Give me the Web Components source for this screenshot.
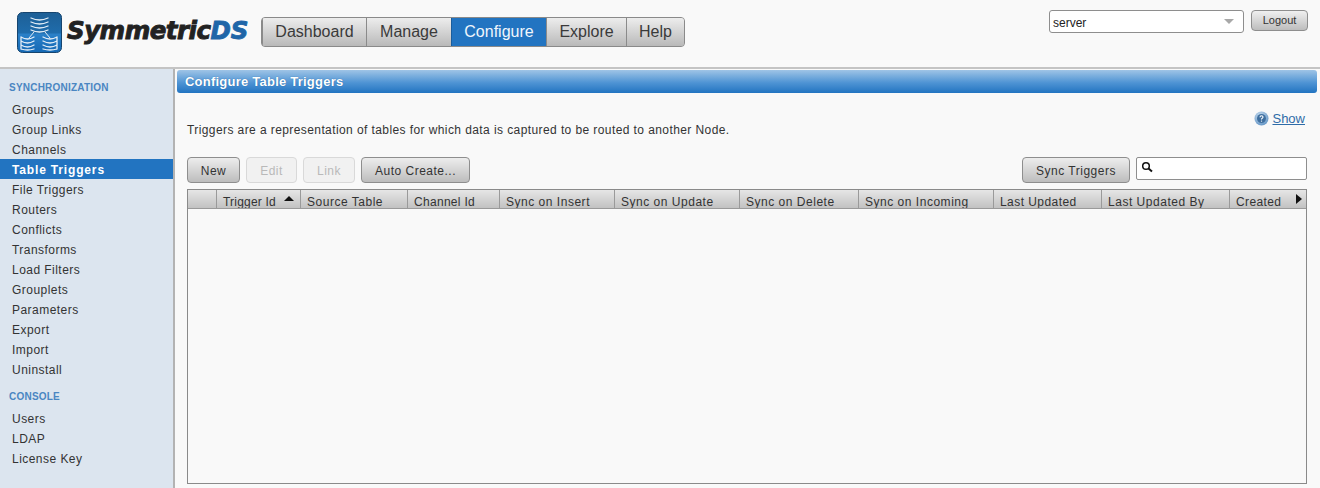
<!DOCTYPE html>
<html><head><meta charset="utf-8"><style>
html,body{margin:0;padding:0;height:488px;overflow:hidden;background:#f9f9f9;font:12px "Liberation Sans",Arial,sans-serif;color:#333}
</style></head><body>
<app-shell>
  <top-bar slot="top"></top-bar>
  <side-nav slot="side"></side-nav>
  <trigger-page slot="main"></trigger-page>
</app-shell>
<script>
const def=(name,html,init)=>customElements.define(name,class extends HTMLElement{
  constructor(){super();this.attachShadow({mode:'open'}).innerHTML=typeof html==='function'?html(this):html;}
  connectedCallback(){init&&init(this)}
});
def('app-shell',`<style>
:host{display:grid;grid-template-rows:67px 421px;grid-template-columns:173px 1147px;height:488px;overflow:hidden}
.t{grid-column:1/3}
.s{min-height:0;min-width:0}.m{min-width:0;min-height:0}
</style><div class="t"><slot name="top"></slot></div><div class="s"><slot name="side"></slot></div><div class="m"><slot name="main"></slot></div>`);

def('logo-mark',`<style>
:host{display:flex;align-items:center;gap:5px;width:244px}
svg{display:block;flex:none}
.w{font:italic 700 24.500px "DejaVu Sans",sans-serif;letter-spacing:-.5px;color:#222;-webkit-text-stroke:.9px #222;white-space:nowrap;line-height:34px;display:block;margin-top:-3px}
.w b{font-weight:700;color:#1f66a8;-webkit-text-stroke:.9px #1f66a8;letter-spacing:-.2px}
</style>
<svg width="45" height="41" viewBox="0 0 45 41"><defs><linearGradient id="g" x1="0" y1="0" x2="0" y2="1"><stop offset="0" stop-color="#1d5f96"/><stop offset=".5" stop-color="#1f6cab"/><stop offset=".55" stop-color="#2a80c8"/><stop offset="1" stop-color="#1569b5"/></linearGradient></defs>
<rect x=".5" y=".5" width="44" height="40" rx="5" fill="url(#g)" stroke="#16456f"/>
<g fill="none" stroke="#e4eef7" stroke-width="1.300" stroke-linecap="round">
<path d="M14 6q8.500 4 17 0M14 10q8.500 4 17 0M14 14q8.500 4 17 0M14 18q8.500 4 17 0"/>
<path d="M4 25q6.500 4 13 0M4 29q6.500 4 13 0M4 33q6.500 4 13 0M4 37q6.500 2 13 0M4 25v12"/>
<path d="M26 25q7 4 14 0M26 29q7 4 14 0M26 33q7 4 14 0M26 37q7 2 14 0M40 25v12"/>
<path d="M17 20l-5 6M28 20l5 6" stroke-width="1"/></g></svg>
<span class="w">Symmetric<b>DS</b></span>`);

def('nav-tabs',()=>`<style>
:host{display:flex;height:30px;box-sizing:border-box;border:1px solid #8a8a8a;border-radius:4px;overflow:hidden;background:#ccc}
a{display:flex;align-items:center;justify-content:center;font-size:16px;color:#3a3a3a;background:linear-gradient(#ededed,#b9b9b9);border-left:1px solid #8a8a8a;box-sizing:border-box;height:100%}
a:first-child{border-left:0}
a.on{background:#2274c1;color:#f0f6fc;border-left-color:#1a5d9c}
</style>
${[['Dashboard',104],['Manage',85],['Configure',95],['Explore',80],['Help',58]].map(([t,w],i)=>`<a class="${i==2?'on':''}" style="width:${w}px">${t}</a>`).join('')}`);

def('top-bar',`<style>
:host{display:flex;height:67px;box-sizing:border-box;background:#f9f9f9;padding:12px 12px 0 17px}
.l{display:flex;align-items:flex-start}
nav-tabs{margin:5px 0 0 0}
.r{margin-left:auto;display:flex;gap:7px;align-items:flex-start;margin-top:-2px}
.sel{width:195px;height:23px;box-sizing:border-box;border:1px solid #8e8e8e;border-radius:3px;background:#fff;display:flex;align-items:center;padding:2px 9px 0 3px;font-size:12px;color:#222;justify-content:space-between}
.arr{width:0;height:0;border:5px solid transparent;border-top:5px solid #a8a8a8;border-bottom:0;margin-top:-2px}
.lo{width:57px;height:21px;box-sizing:border-box;border:1px solid #8e8e8e;border-radius:4px;background:linear-gradient(#f0f0f0,#bdbdbd);font-size:11px;display:flex;align-items:center;justify-content:center;color:#333;padding-bottom:2px}
</style><div class="l"><logo-mark></logo-mark><nav-tabs></nav-tabs></div>
<div class="r"><div class="sel"><span>server</span><i class="arr"></i></div><div class="lo">Logout</div></div>`);

const sec=(t,items)=>`<h4>${t}</h4>`+items.map(i=>`<a class="${i=='Table Triggers'?'on':''}">${i}</a>`).join('');
def('side-nav',`<style>
:host{display:block;height:421px;box-sizing:border-box;background:#dce5ef;border-top:2px solid #c4c4c4;border-right:2px solid #b3b3b3;padding-top:12px;width:175px}
h4{margin:0;font:700 10px/14px "Liberation Sans",sans-serif;color:#4a86c2;padding-left:9px;letter-spacing:.22px;height:18px}
a{display:block;height:20px;line-height:22px;padding-left:12px;color:#333;font-size:12px;letter-spacing:.46px}
a.on{background:#2274c1;color:#fff;font-weight:700;letter-spacing:.84px}
.gap{height:11px}
</style>`+sec('SYNCHRONIZATION',['Groups','Group Links','Channels','Table Triggers','File Triggers','Routers','Conflicts','Transforms','Load Filters','Grouplets','Parameters','Export','Import','Uninstall'])+'<div class="gap"></div>'+sec('CONSOLE',['Users','LDAP','License Key']));

def('ui-button',`<style>
:host{display:flex;align-items:center;justify-content:center;height:26px;box-sizing:border-box;border:1px solid #8e8e8e;border-radius:4px;background:linear-gradient(#ededed,#bdbdbd);color:#333;font-size:12px;letter-spacing:.5px;padding-top:1px}
:host([disabled]){background:#f1f1f1;border-color:#d9d9d9;color:#b9b9b9}
</style><slot></slot>`);

const cols=[['',28,0],['Trigger Id',84,.2],['Source Table',107,.52],['Channel Id',92,.3],['Sync on Insert',115,.52],['Sync on Update',125,.52],['Sync on Delete',119,.52],['Sync on Incoming',135,.52],['Last Updated',108,.44],['Last Updated By',128,.52],['Created',77,.38]];
def('data-grid',()=>`<style>
:host{display:block;height:295px;box-sizing:border-box;border:1px solid #8a8a8a;background:#f9f9f9;overflow:hidden}
.h{display:grid;grid-template-columns:${cols.map(c=>c[1]+'px').join(' ')};height:18px;border-bottom:1px solid #9a9a9a;background:linear-gradient(#e6e6e6,#c2c2c2);position:relative;overflow:hidden}
.c{border-left:1px solid #9a9a9a;padding-left:6px;line-height:24px;height:18px;overflow:hidden;white-space:nowrap;color:#333;font-size:12px;box-sizing:border-box}
.c:first-child{border-left:0}
.up{position:absolute;left:96px;top:6px;width:0;height:0;border:5px solid transparent;border-top:0;border-bottom:5px solid #111}
.more{position:absolute;right:4px;top:4px;width:0;height:0;border:5px solid transparent;border-right:0;border-left:6px solid #111}
</style><div class="h">${cols.map(c=>`<div class="c" style="letter-spacing:${c[2]}px">${c[0]}</div>`).join('')}<i class="up"></i><i class="more"></i></div>`);

def('trigger-page',`<style>
:host{display:block;height:421px;box-sizing:border-box;border-top:2px solid #c4c4c4;padding:1px 3px 0 4px;overflow:hidden}
.bar{height:23px;border-radius:3px;background:linear-gradient(#9fc4e6,#4f94d4 55%,#2274c1);color:#fff;font:700 13px/23px "Liberation Sans",sans-serif;padding-left:8px;letter-spacing:.23px;text-shadow:0 0 1px #1a5d9c}
.body{padding:0 10px 0 10px}
.show{display:flex;justify-content:flex-end;align-items:center;gap:3px;height:16px;margin-top:17px;color:#2f6ca8;padding-right:2px}
.show u{font-size:13px}
.d{height:20px;line-height:20px;margin-top:-6px;letter-spacing:.41px;color:#333}
.tb{display:flex;gap:6px;margin-top:17px;margin-bottom:6px}
.sp{flex:1}
.q{width:171px;height:23px;box-sizing:border-box;border:1px solid #8e8e8e;border-radius:2px;background:#fff;padding:3px 0 0 4px}
svg{display:block}
</style>
<div class="bar">Configure Table Triggers</div>
<div class="body">
<div class="show"><svg width="15" height="15" viewBox="0 0 15 15"><defs><radialGradient id="h" cx=".4" cy=".3" r=".8"><stop offset="0" stop-color="#c7dcef"/><stop offset="1" stop-color="#5a8fc2"/></radialGradient></defs><circle cx="7.500" cy="7.500" r="7" fill="url(#h)"/><circle cx="7.500" cy="7.500" r="4.500" fill="#3f6f9f"/><path d="M6 6.200q0-1.500 1.500-1.500t1.500 1.400q0 .9-1 1.300-.5.300-.5 1" fill="none" stroke="#fff" stroke-width="1.100"/><circle cx="7.500" cy="10.100" r=".7" fill="#fff"/></svg><u>Show</u></div>
<div class="d">Triggers are a representation of tables for which data is captured to be routed to another Node.</div>
<div class="tb"><ui-button style="width:53px">New</ui-button><ui-button disabled style="width:51px">Edit</ui-button><ui-button disabled style="width:52px">Link</ui-button><ui-button style="width:109px">Auto Create...</ui-button><span class="sp"></span><ui-button style="width:108px">Sync Triggers</ui-button><div class="q"><svg width="12" height="12" viewBox="0 0 12 12"><circle cx="5" cy="5" r="3.300" fill="none" stroke="#111" stroke-width="1.500"/><path d="M7.500 7.500L11 10.500" stroke="#111" stroke-width="2"/></svg></div></div>
<data-grid></data-grid>
</div>`);
</script>
</body></html>
